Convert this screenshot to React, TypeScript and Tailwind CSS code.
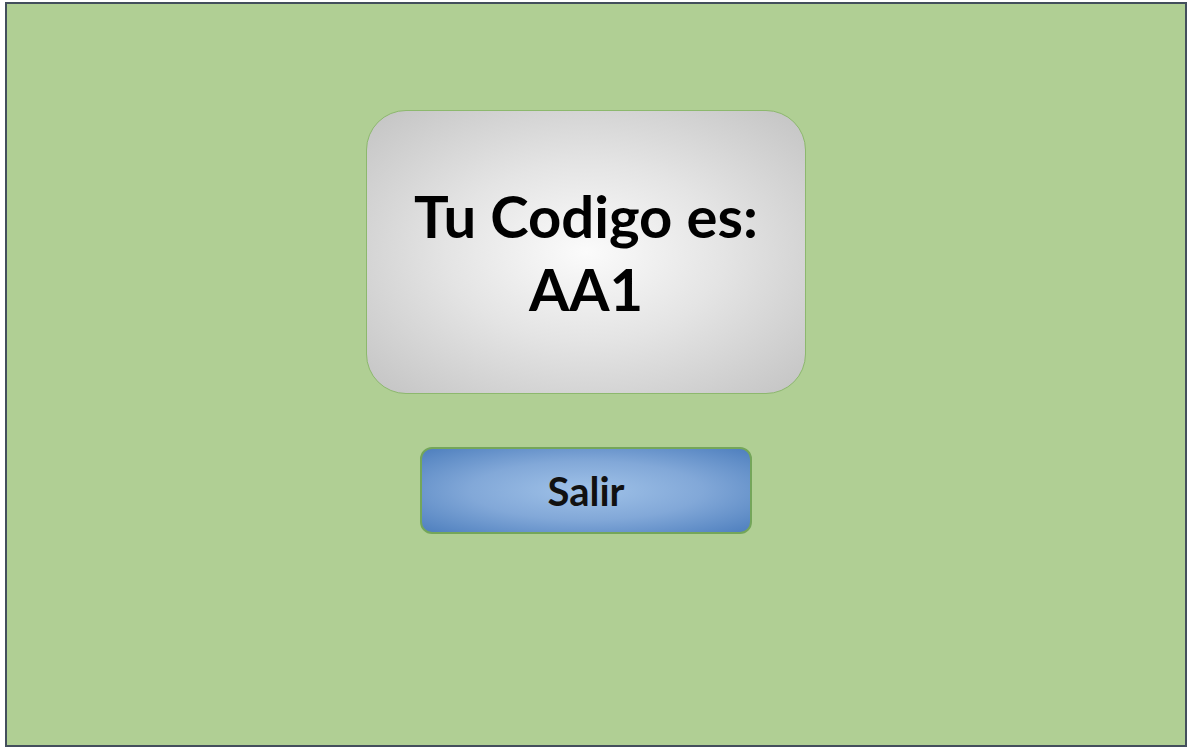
export default function App() {
  return (
    <div className="w-[1190px] h-[750px] bg-white pl-[5px] pt-[2px] overflow-hidden">
      {/* Frame */}
      <div className="w-[1182px] h-[745px] border-2 border-[#434f5c] bg-[#b0cf94] flex flex-col items-center pt-[106px] pr-[20px] font-['Lato','Open_Sans',sans-serif]">
        {/* Code card */}
        <div className="w-[440px] h-[284px] rounded-[40px] border border-[#8db86e] bg-[radial-gradient(ellipse_at_center,#fbfbfb_0%,#e4e4e4_45%,#c3c3c3_100%)] flex flex-col items-center justify-center text-black font-bold text-[58px] leading-[73px]">
          <span>Tu Codigo es:</span>
          <span>AA1</span>
        </div>

        {/* Exit button */}
        <button className="mt-[53px] w-[332px] h-[87px] rounded-[12px] border-2 border-[#74a65a] bg-[radial-gradient(ellipse_at_center,#a0c2e8_0%,#82a8d8_50%,#4e7fbe_100%)] flex items-center justify-center text-[#111] font-bold text-[40px] leading-none">
          Salir
        </button>
      </div>
    </div>
  )
}
